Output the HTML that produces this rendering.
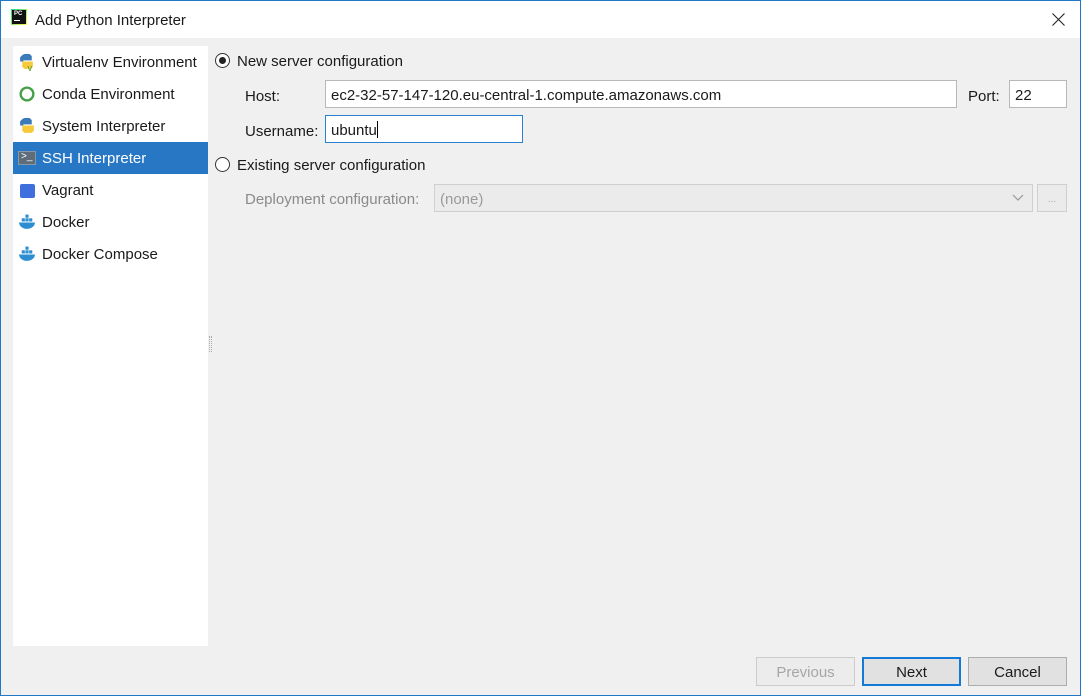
<!DOCTYPE html>
<html><head><meta charset="utf-8">
<style>
*{margin:0;padding:0;box-sizing:border-box}
body{width:1081px;height:696px;overflow:hidden;background:#f0f0f0;font-family:"Liberation Sans",sans-serif;font-size:15px;color:#1a1a1a;position:relative}
.win{position:absolute;left:0;top:0;width:1081px;height:696px;border:1px solid #1f78c8}
.title{position:absolute;left:1px;top:1px;width:1079px;height:37px;background:#fff}
.abs{position:absolute;white-space:nowrap}
.list{position:absolute;left:13px;top:46px;width:195px;height:600px;background:#fff}
.item{position:absolute;left:0;width:195px;height:32px;line-height:34px;padding-left:29px}
.item.sel{background:#2777c4;color:#fff}
.ic{position:absolute;left:5px;top:7px;width:18px;height:18px}
.inp{position:absolute;background:#fff;border:1px solid #b8b8b8;height:28px;line-height:29px;padding-left:5px}
.radio{position:absolute;width:15px;height:15px;border:1px solid #333;border-radius:50%;background:#fff}
.btn{position:absolute;top:657px;height:29px;border:1px solid #adadad;background:#e1e1e1;text-align:center;line-height:29px}
</style></head><body>
<div class="win"></div>
<div class="title"></div>
<div class="abs" style="left:11px;top:9px;width:16px;height:16px;background:linear-gradient(135deg,#21d789,#fcf84a)">
 <div style="position:absolute;left:1px;top:1px;width:14px;height:14px;background:#111"></div>
 <div style="position:absolute;left:3px;top:2px;color:#fff;font-size:6px;font-weight:bold">PC</div>
 <div style="position:absolute;left:3px;top:11px;width:6px;height:1px;background:#fff"></div>
</div>
<div class="abs" style="left:35px;top:12px;font-size:15px">Add Python Interpreter</div>
<svg class="abs" style="left:1052px;top:13px" width="13" height="13"><path d="M0.5 0.5L12.5 12.5M12.5 0.5L0.5 12.5" stroke="#222" stroke-width="1.1"/></svg>

<div class="list">
 <div class="item" style="top:0">
  <svg class="ic" viewBox="0 0 17 17"><path d="M6 1h5l2 2v4H5v1H2V4l2-2z" fill="#3d7ab8"/><path d="M4 8h10v5l-2 2H6l-2-2z" fill="#f7c93b"/><text x="9" y="17" font-size="9" fill="#4a9c2a" font-family="Liberation Sans">v</text></svg>
  Virtualenv Environment</div>
 <div class="item" style="top:32px">
  <svg class="ic" viewBox="0 0 17 17"><circle cx="8.5" cy="8.5" r="6" fill="none" stroke="#45a047" stroke-width="2.2"/></svg>
  Conda Environment</div>
 <div class="item" style="top:64px">
  <svg class="ic" viewBox="0 0 17 17"><path d="M6 1h5l2 2v4H5v1H2V4l2-2z" fill="#3d7ab8"/><path d="M4 8h11v5l-2 2H6l-2-2z" fill="#f7c93b"/></svg>
  System Interpreter</div>
 <div class="item sel" style="top:96px">
  <div class="ic" style="background:#5f6d7a;top:9px;height:14px;width:18px;border:1px solid #8a98a6"></div>
  <div class="abs" style="left:8px;top:0;font-size:10px;color:#fff;line-height:30px">&gt;_</div>
  SSH Interpreter</div>
 <div class="item" style="top:128px">
  <div class="ic" style="background:#3f6fdc;border-radius:2px;width:15px;height:14px;top:10px;left:7px"></div>
  Vagrant</div>
 <div class="item" style="top:160px">
  <svg class="ic" viewBox="0 0 17 17"><rect x="3.5" y="5" width="3" height="3" fill="#2e8dd0"/><rect x="7" y="5" width="3" height="3" fill="#2e8dd0"/><rect x="7" y="1.5" width="3" height="3" fill="#2e8dd0"/><rect x="10.5" y="5" width="3" height="3" fill="#2e8dd0"/><path d="M1 9h15c0 4-4 6-8 6S1 12 1 9z" fill="#2e8dd0"/></svg>
  Docker</div>
 <div class="item" style="top:192px">
  <svg class="ic" viewBox="0 0 17 17"><rect x="3.5" y="5" width="3" height="3" fill="#2e8dd0"/><rect x="7" y="5" width="3" height="3" fill="#2e8dd0"/><rect x="7" y="1.5" width="3" height="3" fill="#2e8dd0"/><rect x="10.5" y="5" width="3" height="3" fill="#2e8dd0"/><path d="M1 9h15c0 4-4 6-8 6S1 12 1 9z" fill="#2e8dd0"/></svg>
  Docker Compose</div>
</div>
<div class="abs" style="left:209px;top:336px;width:3px;height:16px;border-left:1px dotted #aaa;border-right:1px dotted #aaa"></div>

<div class="radio" style="left:215px;top:53px"><div style="position:absolute;left:3px;top:3px;width:7px;height:7px;border-radius:50%;background:#222"></div></div>
<div class="abs" style="left:237px;top:53px">New server configuration</div>
<div class="abs" style="left:245px;top:88px">Host:</div>
<div class="inp" style="left:325px;top:80px;width:632px">ec2-32-57-147-120.eu-central-1.compute.amazonaws.com</div>
<div class="abs" style="left:968px;top:88px">Port:</div>
<div class="inp" style="left:1009px;top:80px;width:58px">22</div>
<div class="abs" style="left:245px;top:123px">Username:</div>
<div class="inp" style="left:325px;top:115px;width:198px;border-color:#2a7fd0">ubuntu<span style="display:inline-block;width:1px;height:17px;background:#000;vertical-align:-3px"></span></div>
<div class="radio" style="left:215px;top:157px"></div>
<div class="abs" style="left:237px;top:157px">Existing server configuration</div>
<div class="abs" style="left:245px;top:191px;color:#8a8a8a">Deployment configuration:</div>
<div class="inp" style="left:434px;top:184px;width:599px;background:#ebebeb;border-color:#cfcfcf;color:#9a9a9a">(none)
 <svg class="abs" style="right:8px;top:9px" width="12" height="8"><path d="M1 1l5 5 5-5" stroke="#999" fill="none" stroke-width="1.2"/></svg></div>
<div class="inp" style="left:1037px;top:184px;width:30px;background:#ebebeb;border-color:#cfcfcf;color:#aaa;font-size:10px;text-align:center;padding:0">...</div>

<div class="btn" style="left:756px;width:99px;color:#a6a6a6;border-color:#cccccc;background:#ececec">Previous</div>
<div class="btn" style="left:862px;width:99px;border:2px solid #1479d7;line-height:27px">Next</div>
<div class="btn" style="left:968px;width:99px">Cancel</div>
</body></html>
